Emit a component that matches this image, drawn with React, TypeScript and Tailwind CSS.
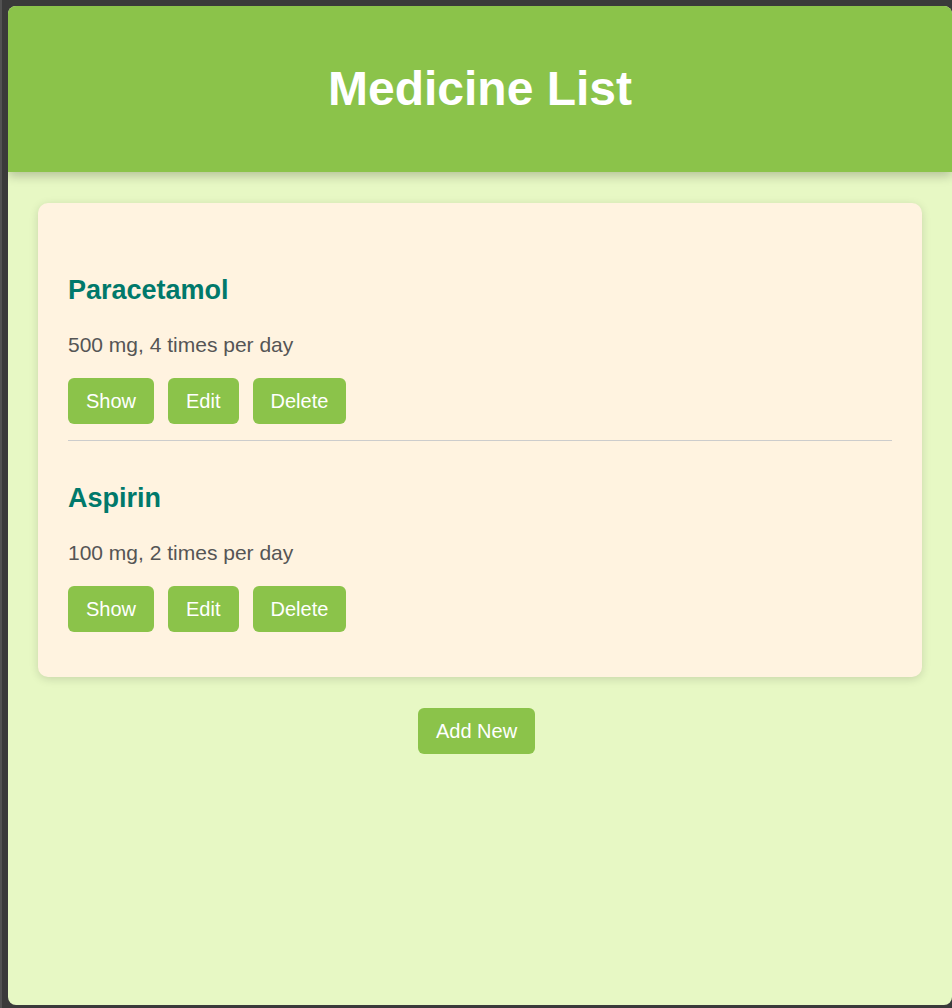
import React from "react";

const medicines = [
  { name: "Paracetamol", detail: "500 mg, 4 times per day" },
  { name: "Aspirin", detail: "100 mg, 2 times per day" },
];

function Btn({ label, last }: { label: string; last?: boolean }) {
  return (
    <button
      className={`h-[46px] px-[18px] rounded-[6px] bg-[#8bc34a] text-white text-[20px] leading-[23px] ${last ? "" : "mr-[14px]"}`}
    >
      {label}
    </button>
  );
}

export default function App() {
  return (
    <div
      className="w-[952px] h-[1008px] bg-[#3a3a3a] border-l-2 border-[#525252] overflow-hidden"
      style={{ fontFamily: '"Liberation Sans", Arial, sans-serif' }}
    >
      <div className="ml-[6px] mt-[6px] w-[944px] h-[999px] rounded-[8px] bg-[#e7f8c4] overflow-hidden flex flex-col">
        <header className="relative z-10 bg-[#8bc34a] h-[166px] pt-[55px] shadow-[0_4px_10px_rgba(0,0,0,0.22)]">
          <h1 className="text-center text-white font-bold text-[48px] leading-[55px]">
            Medicine List
          </h1>
        </header>
        <main className="px-[30px] pt-[31px]">
          <div className="bg-[#fff3e0] rounded-[10px] px-[30px] pt-[30px] pb-[29px] shadow-[0_2px_10px_rgba(0,0,0,0.14)]">
            {medicines.map((m, i) => (
              <div
                key={m.name}
                className={`pt-[42px] pb-[16px] ${i < medicines.length - 1 ? "border-b border-[#cccccc]" : ""}`}
              >
                <h2 className="text-[#00796b] font-bold text-[27px] leading-[31px]">
                  {m.name}
                </h2>
                <p className="mt-[27px] text-[#555555] text-[21px] leading-[24px]">
                  {m.detail}
                </p>
                <div className="mt-[21px] flex">
                  <Btn label="Show" />
                  <Btn label="Edit" />
                  <Btn label="Delete" last />
                </div>
              </div>
            ))}
          </div>
          <div className="mt-[31px] flex justify-center">
            <button className="h-[46px] px-[18px] rounded-[6px] bg-[#8bc34a] text-white text-[20px] leading-[23px] mr-[7px]">
              Add New
            </button>
          </div>
        </main>
      </div>
    </div>
  );
}
